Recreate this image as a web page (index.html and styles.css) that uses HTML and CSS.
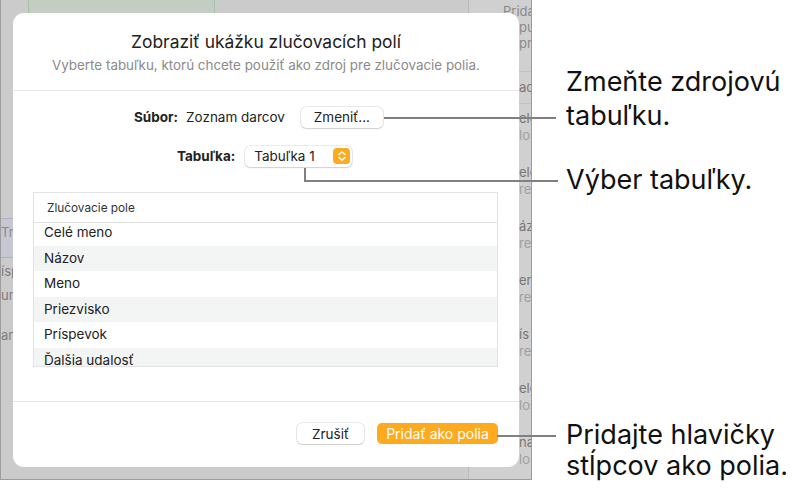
FILE: index.html
```html
<!DOCTYPE html>
<html lang="sk">
<head>
    <meta charset="UTF-8">
    <meta name="viewport" content="width=device-width, initial-scale=1.0">
    <title>Zobraziť ukážku zlučovacích polí</title>
    <link rel="stylesheet" href="styles.css">
</head>
<body>
    <div class="page">
        <div class="shot">
            <div class="app">
                <div class="canvas">
                    <div class="sheet-top"></div>
                    <div class="left-rows">
                        <div class="left-band">Tre</div>
                        <div class="left-item">ísp</div>
                        <div class="left-item">un</div>
                        <div class="left-item left-gap">an</div>
                    </div>
                </div>
                <aside class="sidebar">
                    <div class="side-head">
                        <span class="side-top">Prida</span>
                        <span>pux</span>
                        <span>pri</span>
                    </div>
                    <div class="side-sec">aci</div>
                    <div class="side-item"><span class="t">elé</span><span class="s">los</span></div>
                    <div class="side-item"><span class="t">elé</span><span class="s">re</span></div>
                    <div class="side-item"><span class="t">áz</span><span class="s">re</span></div>
                    <div class="side-item"><span class="t">en</span><span class="s">re</span></div>
                    <div class="side-item"><span class="t">ís</span><span class="s">re</span></div>
                    <div class="side-item"><span class="t">elé</span><span class="s">los</span></div>
                    <div class="side-item"><span class="t">na</span><span class="s">los</span></div>
                </aside>
            </div>

            <div class="dialog">
                <div class="dialog-head">
                    <h1>Zobraziť ukážku zlučovacích polí</h1>
                    <p>Vyberte tabuľku, ktorú chcete použiť ako zdroj pre zlučovacie polia.</p>
                </div>
                <div class="dialog-body">
                    <div class="field-row row-file">
                        <span class="label">Súbor:</span>
                        <span class="value">Zoznam darcov</span>
                        <button class="btn btn-change">Zmeniť...</button>
                    </div>
                    <div class="field-row row-table">
                        <span class="label">Tabuľka:</span>
                        <div class="popup">
                            <span>Tabuľka 1</span>
                            <span class="stepper">
                                <svg width="10" height="12" viewBox="0 0 10 12">
                                    <path d="M2 4.5 L5 1.8 L8 4.5 M2 7.5 L5 10.2 L8 7.5" fill="none" stroke="#fff" stroke-width="1.6" stroke-linecap="round" stroke-linejoin="round"/>
                                </svg>
                            </span>
                        </div>
                    </div>
                    <div class="fields">
                        <div class="fields-head">Zlučovacie pole</div>
                        <div class="fields-list">
                            <div class="fields-inner">
                                <div class="field">Celé meno</div>
                                <div class="field">Názov</div>
                                <div class="field">Meno</div>
                                <div class="field">Priezvisko</div>
                                <div class="field">Príspevok</div>
                                <div class="field">Ďalšia udalosť</div>
                            </div>
                        </div>
                    </div>
                </div>
                <div class="dialog-foot">
                    <button class="btn btn-cancel">Zrušiť</button>
                    <button class="btn btn-primary">Pridať ako polia</button>
                </div>
            </div>
        </div>

        <div class="notes">
            <p class="note note-change">Zmeňte zdrojovú<br>tabuľku.</p>
            <p class="note note-table">Výber tabuľky.</p>
            <p class="note note-add">Pridajte hlavičky<br>stĺpcov ako polia.</p>
        </div>

        <span class="leader leader-change"></span>
        <span class="leader leader-table"></span>
        <span class="leader leader-add"></span>
    </div>
</body>
</html>
```

FILE: styles.css
```css
body {
    margin: 0;
    font-family: Inter, "Noto Sans", sans-serif;
    background: #fff;
    color: #1d1d1f;
}
.page {
    position: relative;
    display: flex;
    width: 798px;
    height: 497px;
}

/* dimmed screenshot behind the sheet */
.shot {
    position: relative;
    width: 530px;
    height: 479px;
    border: 1px solid #9c9c9c;
    border-top: none;
    background: #cbcbcb;
    overflow: hidden;
    flex: none;
}
.app {
    display: flex;
    height: 100%;
}
.canvas {
    width: 467px;
    flex: none;
}
.sheet-top {
    margin-left: 27px;
    width: 185px;
    height: 14px;
    background: #c4cdc3;
    border-left: 1px solid #a6c4a2;
    border-right: 1px solid #a6c4a2;
}
.left-rows {
    padding-top: 204px;
    font-size: 13px;
    color: #7d7d7d;
}
.left-band {
    height: 38px;
    line-height: 26px;
    background: #c6c7d3;
    border-top: 1px solid #aeb0c9;
    border-bottom: 1px solid #aeb0c9;
    color: #8a8a92;
}
.left-item {
    height: 22px;
    line-height: 22px;
    margin-top: 2px;
}
.left-gap {
    margin-top: 18px;
}
.sidebar {
    flex: 1;
    border-left: 1px solid #b9b9b9;
    background: #d0d0d0;
    font-size: 13px;
    color: #777;
    white-space: nowrap;
}
.side-head {
    display: flex;
    flex-direction: column;
    padding: 3px 0 0 50px;
    height: 72px;
    line-height: 16px;
    color: #8a8a8a;
    border-bottom: 1px solid #c2c2c2;
    box-sizing: border-box;
}
.side-head .side-top {
    margin-left: -16px;
}
.side-sec {
    height: 31px;
    line-height: 30px;
    padding-left: 50px;
    border-bottom: 1px solid #c2c2c2;
}
.side-item {
    display: flex;
    flex-direction: column;
    padding: 6px 0 0 50px;
    height: 54px;
    box-sizing: border-box;
    line-height: 17px;
}
.side-item .s {
    color: #a0a0a0;
}

/* the sheet */
.dialog {
    position: absolute;
    left: 12px;
    top: 13px;
    width: 506px;
    height: 454px;
    background: #fff;
    border-radius: 11px;
    display: flex;
    flex-direction: column;
}
.dialog-head {
    height: 78px;
    box-sizing: border-box;
    padding-top: 18px;
    border-bottom: 1px solid #e6e6e6;
    text-align: center;
}
.dialog-head h1 {
    margin: 0;
    font-size: 17.4px;
    font-weight: 400;
    line-height: 22px;
    color: #222;
}
.dialog-head p {
    margin: 4px 0 0;
    font-size: 13.4px;
    line-height: 17px;
    color: #8a8a8a;
}
.dialog-body {
    height: 311px;
    box-sizing: border-box;
    padding: 15px 21px 0 20px;
    border-bottom: 1px solid #e6e6e6;
}
.field-row {
    display: flex;
    align-items: center;
    height: 22px;
    font-size: 13.5px;
    color: #222;
}
.row-file {
    padding-left: 101px;
}
.row-table {
    margin-top: 17px;
    padding-left: 144px;
}
.label {
    font-weight: 700;
}
.row-file .value {
    margin-left: 8px;
}
.btn {
    font-family: inherit;
    font-size: 13.5px;
    height: 21px;
    border: none;
    border-radius: 5px;
    background: #fff;
    color: #222;
    box-shadow: 0 0 0 0.5px rgba(0, 0, 0, 0.16), 0 1px 1.5px rgba(0, 0, 0, 0.12);
    padding: 0;
}
.btn-change {
    width: 82px;
    margin-left: 16px;
}
.popup {
    display: flex;
    align-items: center;
    justify-content: space-between;
    margin-left: 10px;
    width: 107px;
    height: 21px;
    box-sizing: border-box;
    padding: 0 2px 0 9px;
    border-radius: 5px;
    box-shadow: 0 0 0 0.5px rgba(0, 0, 0, 0.16), 0 1px 1.5px rgba(0, 0, 0, 0.12);
}
.stepper {
    display: flex;
    align-items: center;
    justify-content: center;
    width: 17px;
    height: 16px;
    border-radius: 4px;
    background: #fdaa1f;
}
.fields {
    margin-top: 25px;
    height: 175px;
    border: 1px solid #e3e3e3;
    box-sizing: border-box;
    display: flex;
    flex-direction: column;
}
.fields-head {
    height: 29px;
    line-height: 30px;
    padding-left: 13px;
    font-size: 11.8px;
    color: #333;
    border-bottom: 1px solid #e3e3e3;
    flex: none;
}
.fields-list {
    flex: 1;
    overflow: hidden;
}
.fields-inner {
    margin-top: -3px;
}
.field {
    height: 25.5px;
    line-height: 25.5px;
    padding-left: 10px;
    font-size: 13.5px;
    color: #222;
}
.field:nth-child(even) {
    background: #f3f4f4;
}
.dialog-foot {
    display: flex;
    justify-content: flex-end;
    gap: 13px;
    padding: 21px 21px 0 0;
}
.btn-cancel {
    width: 67px;
}
.btn-primary {
    width: 121px;
    font-size: 14px;
    background: #fdaa1f;
    color: #fff;
    box-shadow: none;
}

/* annotations */
.notes {
    margin-left: 34px;
    padding-top: 65px;
    font-size: 27px;
    color: #111;
}
.note {
    margin: 0;
    line-height: 34px;
}
.note-table {
    margin-top: 30px;
}
.note-add {
    margin-top: 222px;
    line-height: 31px;
}
.leader {
    position: absolute;
    background: #808080;
    height: 2px;
}
.leader-change {
    left: 384px;
    top: 117px;
    width: 172px;
}
.leader-table {
    left: 304px;
    top: 168px;
    width: 252px;
    height: 12px;
    background: none;
    border-left: 2px solid #808080;
    border-bottom: 2px solid #808080;
}
.leader-add {
    left: 497px;
    top: 435px;
    width: 59px;
}
```
